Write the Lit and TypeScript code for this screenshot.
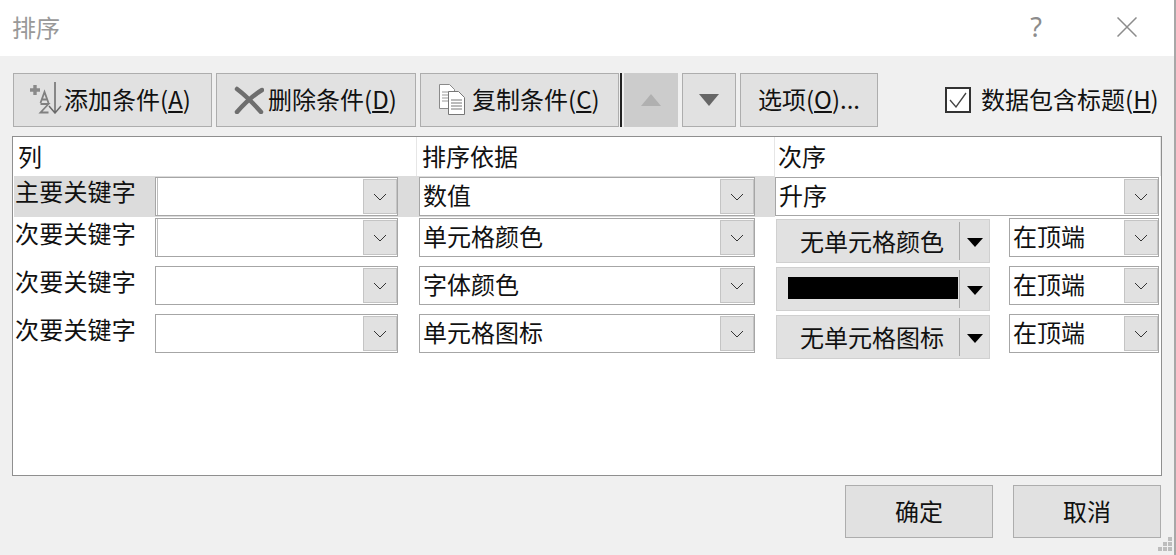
import { LitElement, html, css, svg } from "lit";
import { customElement } from "lit/decorators.js";

const chevron = html`<svg width="14" height="8" viewBox="0 0 14 8"><path d="M1 1l6 6 6-6" fill="none" stroke="#333" stroke-width="1"/></svg>`;

const rows = [
  { label: "主要关键字", sort: "数值", active: true },
  { label: "次要关键字", sort: "单元格颜色", pick: "无单元格颜色" },
  { label: "次要关键字", sort: "字体颜色", swatch: true },
  { label: "次要关键字", sort: "单元格图标", pick: "无单元格图标" },
];

const addIcon = svg`
  <path d="M0 8h10M5 3v10" stroke="#8a8a8a" stroke-width="3.4"/>
  <path d="M25 0v30M19 24l6 7 6-7" fill="none" stroke="#6a6a6a" stroke-width="1.5"/>
  <path d="M10.5 21l4-11 4 11M12 17.5h5" fill="none" stroke="#808080" stroke-width="1.8"/>
  <path d="M10.5 22h8l-8 8.500h8" fill="none" stroke="#808080" stroke-width="1.8"/>`;

const copyIcon = svg`
  <path d="M.5.5h10l5 5v19H.5z" fill="#fff" stroke="#8a8a8a"/>
  <path d="M3 8h9M3 11h9M3 14h9M3 17h9" stroke="#999"/>
  <path d="M9.500 7.500h10l6 6v17h-16z" fill="#fff" stroke="#777"/>
  <path d="M12 16h11M12 19h11M12 22h11M12 25h11" stroke="#777"/>`;

@customElement("app-root")
export class AppRoot extends LitElement {
  static styles = css`
    :host {
      display: block;
      width: 1176px;
      height: 555px;
      overflow: hidden;
      position: relative;
      background: #f0f0f0;
      font-family: "Noto Sans CJK SC", "Noto Sans", sans-serif;
      font-size: 24px;
      color: #111;
    }
    .title {
      box-sizing: border-box;
      height: 56px;
      background: #fff;
      display: flex;
      align-items: center;
      padding: 0 39px 3px 12px;
      color: #999;
    }
    .title .name {
      flex: 1;
    }
    .help {
      width: 18px;
      margin-right: 72px;
      text-align: center;
      color: #8c8c8c;
      font-size: 27px;
      font-family: "Noto Sans", sans-serif;
    }
    .toolbar {
      display: flex;
      align-items: center;
      height: 54px;
      margin-top: 17px;
      padding-left: 13px;
      gap: 4px;
    }
    .btn {
      box-sizing: border-box;
      height: 54px;
      display: flex;
      align-items: center;
      justify-content: center;
      background: #e1e1e1;
      border: 1px solid #adadad;
      padding-bottom: 4px;
      white-space: nowrap;
    }
    .btn svg {
      flex: none;
    }
    u {
      text-underline-offset: 2px;
    }
    .add { width: 199px; gap: 2px; justify-content: flex-start; padding-left: 16px; }
    .del { width: 200px; gap: 4px; justify-content: flex-start; padding-left: 17px; }
    .del svg { margin-top: 4px; }
    .copy { width: 199px; gap: 6px; justify-content: flex-start; padding-left: 18px; }
    .copy svg { margin-top: 3px; }
    .sep {
      width: 2px;
      height: 54px;
      background: #222;
      margin: 0 -2px 0 -3px;
    }
    .arrow { width: 54px; padding: 0; }
    .arrow.off { background: #ccc; border-color: #ccc; }
    .opts { width: 138px; }
    .check {
      display: flex;
      align-items: center;
      margin-left: 63px;
      gap: 10px;
      white-space: nowrap;
    }
    .check > div:last-child {
      margin-top: -3px;
    }
    .box {
      box-sizing: border-box;
      width: 26px;
      height: 26px;
      border: 2px solid #333;
      background: #fff;
      display: flex;
      align-items: center;
      justify-content: center;
    }
    .list {
      box-sizing: border-box;
      width: 1150px;
      height: 340px;
      margin: 9px 0 0 12px;
      background: #fff;
      border: 1px solid #8f8f8f;
    }
    .head {
      display: grid;
      grid-template-columns: 404px 358px 1fr;
      height: 39px;
      line-height: 38px;
    }
    .head div {
      padding-left: 5px;
      border-right: 1px solid #e6e6e6;
      box-sizing: border-box;
    }
    .head div:last-child {
      padding-left: 3px;
    }
    .row {
      display: flex;
      height: 48px;
    }
    .row.active {
      height: 42px;
    }
    .keys {
      display: flex;
      width: 761px;
      height: 41px;
      margin-left: 1px;
      flex: none;
    }
    .active .keys {
      background: #dcdcdc;
    }
    .label {
      width: 141px;
      padding-left: 1px;
      box-sizing: border-box;
      line-height: 30px;
      letter-spacing: 0.2px;
      flex: none;
    }
    .combo {
      box-sizing: border-box;
      height: 39px;
      display: flex;
      align-items: center;
      background: #fff;
      border: 1px solid #a6a6a6;
      padding: 0 0 0 3px;
      line-height: 37px;
      flex: none;
    }
    .active .combo {
      margin-top: 1px;
    }
    .combo span {
      flex: 1;
      margin-top: -4px;
    }
    .drop {
      box-sizing: border-box;
      width: 34px;
      height: 35px;
      background: #e1e1e1;
      border: 1px solid #c4c4c4;
      display: flex;
      align-items: center;
      justify-content: center;
      flex: none;
    }
    .col { width: 243px; }
    .col.ruled { box-shadow: inset 1px 0 0 #fff, inset 2px 0 0 #bdbdbd; }
    .by { width: 336px; margin-left: 21px; }
    .order {
      display: flex;
      width: 385px;
    }
    .whole { width: 384px; margin-left: 0; }
    .pick {
      box-sizing: border-box;
      width: 214px;
      height: 44px;
      margin: 1px 19px 0 1px;
      background: #e1e1e1;
      border: 1px solid #d0d0d0;
      display: flex;
      align-items: center;
      flex: none;
    }
    .pick .face {
      width: 183px;
      height: 38px;
      display: flex;
      align-items: center;
      justify-content: center;
      border-right: 1px solid #a9a9a9;
      box-sizing: border-box;
      padding: 0 0 2px 8px;
    }
    .pick .tri {
      flex: 1;
      display: flex;
      justify-content: center;
      padding-top: 3px;
    }
    .swatch {
      width: 170px;
      height: 22px;
      background: #000;
      margin-left: 1px;
    }
    .pos { width: 150px; }
    .foot {
      display: flex;
      justify-content: flex-end;
      gap: 20px;
      margin-top: 9px;
      padding-right: 15px;
    }
    .foot .btn { width: 148px; height: 53px; padding-bottom: 2px; }
    .edge {
      position: absolute;
      top: 0;
      right: 0;
      bottom: 0;
      width: 2px;
      background: #a8a8a8;
    }
    .grip {
      position: absolute;
      right: 3px;
      bottom: 3px;
    }
  `;

  private renderOrder(r: (typeof rows)[number]) {
    if (r.active) {
      return html`<div class="combo whole"><span>升序</span><div class="drop">${chevron}</div></div>`;
    }
    return html`
      <div class="pick">
        <div class="face">${r.swatch ? html`<div class="swatch"></div>` : r.pick}</div>
        <div class="tri"><svg width="16" height="9"><path d="M0 0h16l-8 9z" fill="#000"/></svg></div>
      </div>
      <div class="combo pos"><span>在顶端</span><div class="drop">${chevron}</div></div>
    `;
  }

  render() {
    return html`
      <div class="title">
        <div class="name">排序</div>
        <div class="help">?</div>
        <svg width="20" height="20" viewBox="0 0 20 20"><path d="M.5.5l19 19M19.500.5l-19 19" stroke="#8c8c8c" stroke-width="1.5"/></svg>
      </div>
      <div class="toolbar">
        <div class="btn add">
          <svg width="32" height="32" viewBox="0 0 32 32">${addIcon}</svg>
          <div>添加条件(<u>A</u>)</div>
        </div>
        <div class="btn del">
          <svg width="30" height="28" viewBox="0 0 30 28"><path d="M3 3c8 6 16 14 24 23M28 4C18 10 10 18 3 26" fill="none" stroke="#6e6e6e" stroke-width="4.500" stroke-linecap="round"/></svg>
          <div>删除条件(<u>D</u>)</div>
        </div>
        <div class="btn copy">
          <svg width="27" height="32" viewBox="0 0 27 32">${copyIcon}</svg>
          <div>复制条件(<u>C</u>)</div>
        </div>
        <div class="sep"></div>
        <div class="btn arrow off"><svg width="20" height="12"><path d="M10 0l10 12H0z" fill="#b0b0b0"/></svg></div>
        <div class="btn arrow"><svg width="20" height="12"><path d="M0 0h20L10 12z" fill="#666"/></svg></div>
        <div class="btn opts">选项(<u>O</u>)...</div>
        <div class="check">
          <div class="box"><svg width="18" height="16" viewBox="0 0 18 16"><path d="M1 8l6 7L17 1" fill="none" stroke="#444" stroke-width="1.3"/></svg></div>
          <div>数据包含标题(<u>H</u>)</div>
        </div>
      </div>
      <div class="list">
        <div class="head">
          <div>列</div>
          <div>排序依据</div>
          <div>次序</div>
        </div>
        ${rows.map(
          (r, i) => html`
            <div class="row ${r.active ? "active" : ""}">
              <div class="keys">
                <div class="label">${r.label}</div>
                <div class="combo col ${i < 2 ? "ruled" : ""}"><span></span><div class="drop">${chevron}</div></div>
                <div class="combo by"><span>${r.sort}</span><div class="drop">${chevron}</div></div>
              </div>
              <div class="order">${this.renderOrder(r)}</div>
            </div>
          `
        )}
      </div>
      <div class="foot">
        <div class="btn">确定</div>
        <div class="btn">取消</div>
      </div>
      <div class="edge"></div>
      <svg class="grip" width="16" height="16" viewBox="0 0 16 16">
        <path d="M11 1h4v4h-4zM6 6h4v4H6zM11 6h4v4h-4zM1 11h4v4H1zM6 11h4v4H6zM11 11h4v4h-4z" fill="#bdbdbd"/>
      </svg>
    `;
  }
}
